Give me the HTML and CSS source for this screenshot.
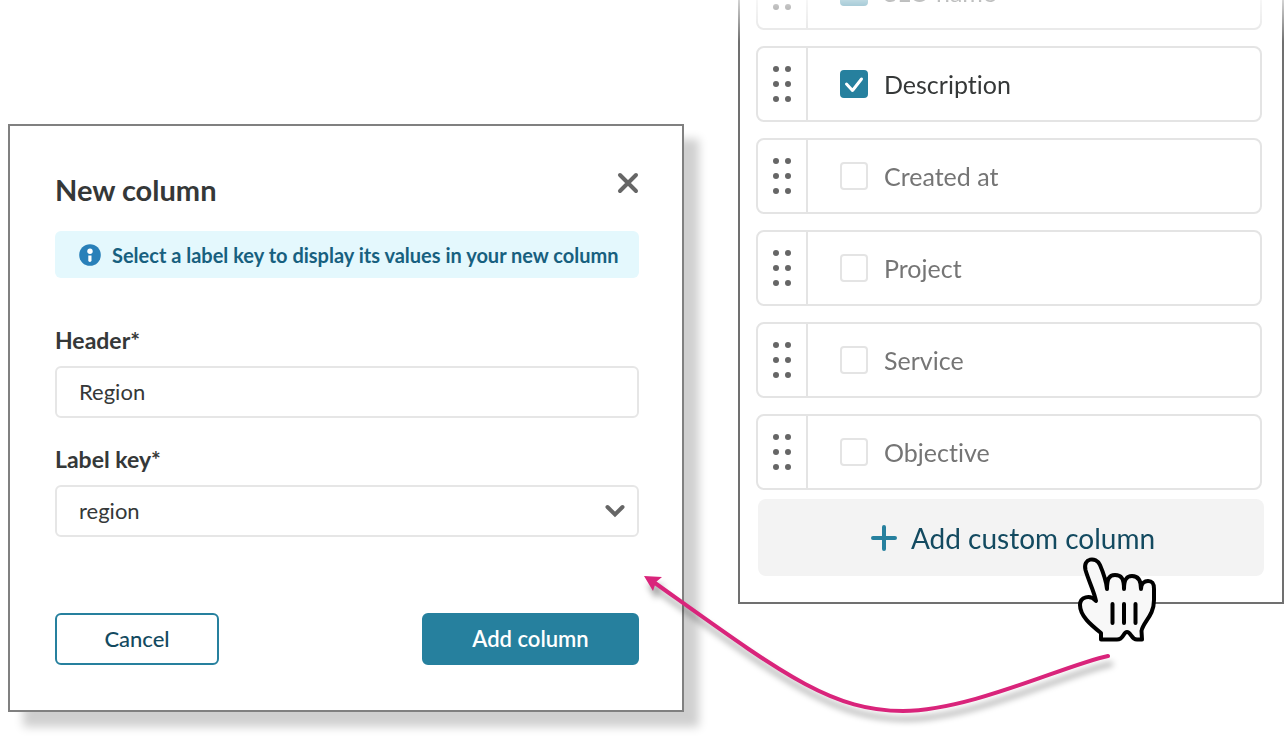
FILE: index.html
```html
<!DOCTYPE html>
<html lang="en">
<head>
    <meta charset="UTF-8">
    <meta name="viewport" content="width=device-width, initial-scale=1.0">
    <title>Custom columns</title>

    <link rel="stylesheet" href="styles.css">
</head>
<body>
    <svg class="sprite" aria-hidden="true">
        <symbol id="grip" viewBox="0 0 18 36">
            <circle cx="3" cy="3" r="3"/><circle cx="15" cy="3" r="3"/>
            <circle cx="3" cy="18" r="3"/><circle cx="15" cy="18" r="3"/>
            <circle cx="3" cy="33" r="3"/><circle cx="15" cy="33" r="3"/>
        </symbol>
    </svg>

    <main class="page">
        <form class="dialog">
            <div class="dialog-head">
                <h2>New column</h2>
                <button class="close" type="button" aria-label="Close">
                    <svg width="22" height="22" viewBox="0 0 22 22"><path d="M3 3L19 19M19 3L3 19"/></svg>
                </button>
            </div>

            <div class="info">
                <svg width="22" height="22" viewBox="0 0 22 22">
                    <circle cx="11" cy="11" r="10.8" fill="#2980b9"/>
                    <circle cx="11" cy="7.3" r="2.7" fill="#fff"/>
                    <path d="M9.3 11.5h3.2v4.8a1.6 1.6 0 0 1-3.2 0z" fill="#fff"/>
                </svg>
                <p>Select a label key to display its values in your new column</p>
            </div>

            <div class="field">
                <label for="header">Header*</label>
                <input id="header" type="text" value="Region">
            </div>

            <div class="field">
                <label for="labelKey">Label key*</label>
                <div class="select">
                    <select id="labelKey">
                        <option>region</option>
                    </select>
                    <svg width="20" height="14" viewBox="0 0 20 14"><path d="M2.5 3L10 10.5L17.5 3"/></svg>
                </div>
            </div>

            <div class="actions">
                <button class="btn cancel" type="button">Cancel</button>
                <button class="btn add" type="submit">Add column</button>
            </div>
        </form>

        <div class="side">
            <section class="panel">
                <ul class="columns">
                    <li>
                        <span class="grip"><svg><use href="#grip"/></svg></span>
                        <label class="on"><input type="checkbox" checked>SLO name</label>
                    </li>
                    <li>
                        <span class="grip"><svg><use href="#grip"/></svg></span>
                        <label class="on"><input type="checkbox" checked>Description</label>
                    </li>
                    <li>
                        <span class="grip"><svg><use href="#grip"/></svg></span>
                        <label><input type="checkbox">Created at</label>
                    </li>
                    <li>
                        <span class="grip"><svg><use href="#grip"/></svg></span>
                        <label><input type="checkbox">Project</label>
                    </li>
                    <li>
                        <span class="grip"><svg><use href="#grip"/></svg></span>
                        <label><input type="checkbox">Service</label>
                    </li>
                    <li>
                        <span class="grip"><svg><use href="#grip"/></svg></span>
                        <label><input type="checkbox">Objective</label>
                    </li>
                </ul>
                <button class="custom" type="button">
                    <svg width="26" height="26" viewBox="0 0 26 26"><path d="M13 2v22M2 13h22"/></svg>
                    Add custom column
                </button>
            </section>

            <!-- hand cursor -->
            <svg class="hand" width="95" height="100" viewBox="0 0 95 100">
                <path d="M26 51C24 41 19 32 15.5 20C12.5 8 26 6 30 15C33 22 36 29 37 39C37 29 39 25 45 25C51 25 54 28 54 39C54 30 56 26 62 26C68 26 71 30 71 39C71 33 75 31 78 31C83 31 84 34 84 39V50C84 66 73 72 71.5 81L72 89.5H67C61 89.5 61 82 57 82C53 82 54 89.5 47 89.5H31V83C21 75 10 66 10 55C10 47 20 44 26 51Z"/>
                <path d="M42.5 54v19M54 54v19M65.5 54v19"/>
            </svg>
        </div>

        <!-- arrow from the button to the dialog -->
        <svg class="arrow" width="490" height="170" viewBox="636 565 490 170">
            <path class="line" d="M1108 656C1065 665 970 711 903 711C830 711 780 672 655 583"/>
            <path class="tip" d="M644 576L662 577L656 582L653 591Z"/>
        </svg>
    </main>
</body>
</html>
```

FILE: styles.css
```css
*{
    margin: 0;
    padding: 0;
    box-sizing: border-box;
    font-family: Lato, "Open Sans", sans-serif;
    font-variant-ligatures: none;
}

body{
    background: #fff;
    color: #353838;
}

.sprite{
    display: none;
}

.page{
    position: relative;
    display: grid;
    grid-template-columns: minmax(0, 676fr) minmax(0, 546fr);
    gap: 54px;
    align-items: start;
    padding-left: 8px;
    padding-bottom: 30px;
}

/* dialog */
.dialog{
    margin-top: 124px;
    padding: 40px 43px 45px 45px;
    border: 2px solid #808080;
    background: #fff;
    box-shadow: 15px 15px 9px rgba(0,0,0,0.19);
}

.dialog-head{
    display: flex;
    justify-content: space-between;
    height: 48px;
    margin-bottom: 17px;
}
.dialog-head h2{
    font-size: 29px;
    line-height: 48px;
}
.close{
    width: 22px;
    height: 34px;
    border: none;
    background: none;
    cursor: pointer;
}
.close svg{
    display: block;
    margin: auto;
    fill: none;
    stroke: #666;
    stroke-width: 4;
    stroke-linecap: round;
}

.info{
    display: flex;
    align-items: center;
    gap: 11px;
    min-height: 47px;
    margin-bottom: 48px;
    padding: 0 16px 0 24px;
    border-radius: 6px;
    background: #e4f8fd;
    color: #17607f;
    font-size: 20px;
    font-weight: bold;
}
.info svg{
    flex: none;
}

.field{
    margin-bottom: 27px;
}
.field label{
    display: block;
    margin-bottom: 12px;
    font-size: 23px;
    font-weight: bold;
    line-height: 28px;
}
.field input, .field select{
    display: block;
    width: 100%;
    height: 52px;
    padding: 0 22px 2px;
    border: 2px solid #e6e6e6;
    border-radius: 6px;
    background: #fff;
    color: #353838;
    font-size: 22px;
}
.field select{
    appearance: none;
}
.select{
    position: relative;
}
.select svg{
    position: absolute;
    top: 19px;
    right: 14px;
    fill: none;
    stroke: #666;
    stroke-width: 4;
    stroke-linecap: round;
    pointer-events: none;
}

.actions{
    display: flex;
    justify-content: space-between;
    margin-top: 76px;
}
.btn{
    height: 52px;
    padding: 0 46px 2px;
    border: 2px solid #26809e;
    border-radius: 6px;
    font-size: 22px;
    font-weight: 500;
    cursor: pointer;
}
.cancel{
    min-width: 164px;
    background: #fff;
    color: #134a60;
}
.add{
    min-width: 217px;
    background: #26809e;
    color: #fff;
    font-weight: 600;
}

/* column list */
.side{
    position: relative;
}
.panel{
    display: flex;
    flex-direction: column;
    padding: 0 18px 26px 16px;
    border: 2px solid #707070;
    border-top: none;
    mask-image: linear-gradient(rgba(0,0,0,0.3), #000 42px);
}
.columns{
    display: flex;
    flex-direction: column;
    gap: 16px;
    margin-top: -46px;
    margin-right: 2px;
    list-style: none;
}
.columns li{
    display: flex;
    height: 76px;
    border: 2px solid #e4e4e4;
    border-radius: 8px;
}
.grip{
    display: flex;
    align-items: center;
    justify-content: center;
    width: 50px;
    border-right: 2px solid #e4e4e4;
}
.grip svg{
    width: 18px;
    height: 36px;
    fill: #666;
}
.columns label{
    display: flex;
    flex: 1;
    align-items: center;
    gap: 16px;
    padding-left: 32px;
    color: #757575;
    font-size: 25px;
}
.columns label.on{
    color: #353838;
}
.columns input{
    appearance: none;
    width: 28px;
    height: 28px;
    border: 2px solid #e4e4e4;
    border-radius: 4px;
}
.columns input:checked{
    border-color: #26809e;
    background: #26809e url("data:image/svg+xml,%3Csvg xmlns='http://www.w3.org/2000/svg' viewBox='0 0 24 24'%3E%3Cpath d='M4.5 12L10.5 18.5L19.5 7' fill='none' stroke='%23fff' stroke-width='3' stroke-linecap='round' stroke-linejoin='round'/%3E%3C/svg%3E") center / 24px no-repeat;
}

.custom{
    display: flex;
    align-items: center;
    justify-content: center;
    gap: 14px;
    height: 77px;
    margin-top: 9px;
    margin-left: 2px;
    padding-left: 4px;
    border: none;
    border-radius: 8px;
    background: #f3f3f3;
    color: #134a60;
    font-size: 28px;
    cursor: pointer;
}
.custom svg{
    fill: none;
    stroke: #26809e;
    stroke-width: 4;
    stroke-linecap: round;
}

.hand{
    position: absolute;
    right: 119px;
    bottom: -46px;
    fill: #f8f8f8;
    stroke: #000;
    stroke-width: 4;
    stroke-linecap: round;
    stroke-linejoin: round;
    pointer-events: none;
}

.arrow{
    position: absolute;
    top: 565px;
    right: 158px;
    filter: drop-shadow(3px 8px 3px rgba(0,0,0,0.35));
    pointer-events: none;
}
.arrow .line{
    fill: none;
    stroke: #d9247b;
    stroke-width: 4;
    stroke-linecap: round;
}
.arrow .tip{
    fill: #d9247b;
}
```
